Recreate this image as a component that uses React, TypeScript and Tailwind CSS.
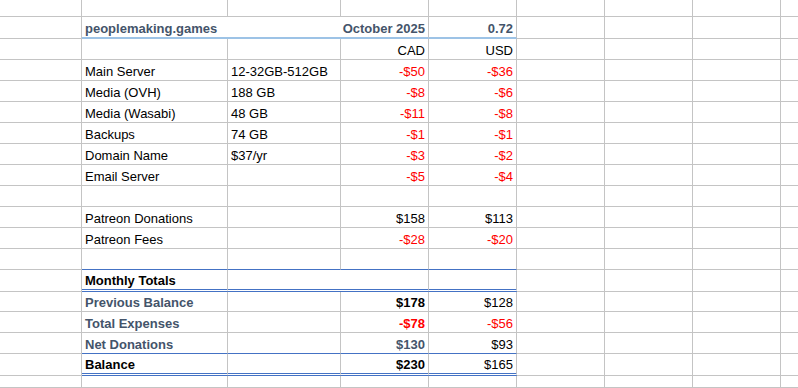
import React from "react";

type Bt = "g" | "h" | "t" | "d";

const bottomCls: Record<Bt, string> = {
  g: "border-b border-b-[#c4c4c4]",
  h: "border-b-2 border-b-[#9dc3e6]",
  t: "border-b border-b-[#4472c4]",
  d: "border-b-[3px] [border-bottom-style:double] border-b-[#4472c4]",
};

type J = "start" | "end" | "between";
const justifyCls: Record<J, string> = {
  start: "justify-start",
  end: "justify-end",
  between: "justify-between",
};

function Cell({
  w,
  b = "g",
  j = "start",
  cls = "",
  children,
  last = false,
}: {
  w: string;
  b?: Bt;
  j?: J;
  cls?: string;
  children?: React.ReactNode;
  last?: boolean;
}) {
  return (
    <div
      className={`${w} shrink-0 flex items-end px-[3px] pb-[1px] leading-[15px] whitespace-nowrap ${
        last ? "" : "border-r border-r-[#c4c4c4]"
      } ${bottomCls[b]} ${justifyCls[j]} ${cls}`}
    >
      {children}
    </div>
  );
}

type RowDef = {
  h: string;
  b?: string;
  c?: string;
  d?: string;
  e?: string;
  bb?: Bt;
  bCls?: string;
  dCls?: string;
  eCls?: string;
};

const red = "text-[#ff0000]";
const slate = "text-[#44546a]";

function Tail() {
  return (
    <>
      <Cell w="w-[88px]" />
      <Cell w="w-[88px]" />
      <Cell w="w-[88px]" />
      <Cell w="flex-1" last />
    </>
  );
}

function Row({ r }: { r: RowDef }) {
  const bb = r.bb ?? "g";
  return (
    <div className={`flex ${r.h}`}>
      <Cell w="w-[82px]" />
      <Cell w="w-[146px]" b={bb} cls={r.bCls}>
        {r.b}
      </Cell>
      <Cell w="w-[113px]" b={bb}>
        {r.c}
      </Cell>
      <Cell w="w-[88px]" b={bb} j="end" cls={r.dCls}>
        {r.d}
      </Cell>
      <Cell w="w-[88px]" b={bb} j="end" cls={r.eCls}>
        {r.e}
      </Cell>
      <Tail />
    </div>
  );
}

const body: RowDef[] = [
  { h: "h-[21px]", d: "CAD", e: "USD" },
  { h: "h-[21px]", b: "Main Server", c: "12-32GB-512GB", d: "-$50", e: "-$36", dCls: red, eCls: red },
  { h: "h-[21px]", b: "Media (OVH)", c: "188 GB", d: "-$8", e: "-$6", dCls: red, eCls: red },
  { h: "h-[21px]", b: "Media (Wasabi)", c: "48 GB", d: "-$11", e: "-$8", dCls: red, eCls: red },
  { h: "h-[21px]", b: "Backups", c: "74 GB", d: "-$1", e: "-$1", dCls: red, eCls: red },
  { h: "h-[21px]", b: "Domain Name", c: "$37/yr", d: "-$3", e: "-$2", dCls: red, eCls: red },
  { h: "h-[21px]", b: "Email Server", d: "-$5", e: "-$4", dCls: red, eCls: red },
  { h: "h-[21px]" },
  { h: "h-[21px]", b: "Patreon Donations", d: "$158", e: "$113" },
  { h: "h-[21px]", b: "Patreon Fees", d: "-$28", e: "-$20", dCls: red, eCls: red },
  { h: "h-[21px]", bb: "t" },
];

const totals: RowDef[] = [
  { h: "h-[20px]", b: "Previous Balance", d: "$178", e: "$128", bCls: `font-bold ${slate}`, dCls: "font-bold" },
  { h: "h-[21px]", b: "Total Expenses", d: "-$78", e: "-$56", bCls: `font-bold ${slate}`, dCls: `font-bold ${red}`, eCls: red },
  { h: "h-[21px]", b: "Net Donations", d: "$130", e: "$93", bb: "t", bCls: `font-bold ${slate}`, dCls: `font-bold ${slate}` },
  { h: "h-[22px]", b: "Balance", d: "$230", e: "$165", bb: "d", bCls: "font-bold", dCls: "font-bold" },
];

export default function App() {
  return (
    <div className="w-[798px] h-[388px] overflow-hidden bg-white text-black text-[13px] font-['Liberation_Sans',Arial,sans-serif]">
      {/* row 0 */}
      <div className="flex h-[17px]">
        <Cell w="w-[82px]" />
        <Cell w="w-[146px]" />
        <Cell w="w-[113px]" />
        <Cell w="w-[88px]" />
        <Cell w="w-[88px]" />
        <Tail />
      </div>
      {/* header row */}
      <div className="flex h-[22px]">
        <Cell w="w-[82px]" />
        <Cell w="w-[347px]" b="h" j="between" cls={`font-bold ${slate}`}>
          <span>peoplemaking.games</span>
          <span>October 2025</span>
        </Cell>
        <Cell w="w-[88px]" b="h" j="end" cls={`font-bold ${slate}`}>
          0.72
        </Cell>
        <Tail />
      </div>
      {body.map((r, i) => (
        <Row key={i} r={r} />
      ))}
      {/* Monthly Totals */}
      <div className="flex h-[22px]">
        <Cell w="w-[82px]" />
        <Cell w="w-[146px]" b="d" cls="font-bold">
          Monthly Totals
        </Cell>
        <Cell w="w-[201px]" b="d" />
        <Cell w="w-[88px]" b="d" />
        <Tail />
      </div>
      {totals.map((r, i) => (
        <Row key={i} r={r} />
      ))}
      <div className="flex h-[12px]">
        <Cell w="w-[82px]" />
        <Cell w="w-[146px]" />
        <Cell w="w-[113px]" />
        <Cell w="w-[88px]" />
        <Cell w="w-[88px]" />
        <Tail />
      </div>
    </div>
  );
}
